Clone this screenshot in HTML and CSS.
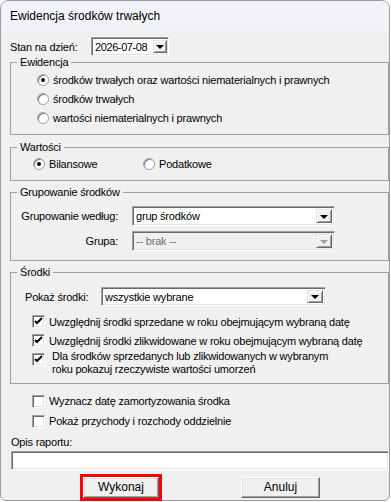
FILE: index.html
```html
<!DOCTYPE html>
<html lang="pl">
<head>
    <meta charset="UTF-8">
    <title>Ewidencja środków trwałych</title>
    <link rel="stylesheet" href="styles.css">
</head>
<body>
<div class="window">
    <div class="titlebar">Ewidencja środków trwałych</div>
    <div class="content">
        <div class="stan-row">
            <span class="stan-label">Stan na dzień:</span>
            <div class="combo date">
                <span class="value">2026-07-08</span>
                <span class="drop"><i class="arrow"></i></span>
            </div>
        </div>

        <fieldset class="group ewidencja">
            <legend>Ewidencja</legend>
            <div class="opt"><span class="radio on"></span>środków trwałych oraz wartości niematerialnych i prawnych</div>
            <div class="opt"><span class="radio"></span>środków trwałych</div>
            <div class="opt"><span class="radio"></span>wartości niematerialnych i prawnych</div>
        </fieldset>

        <fieldset class="group wartosci">
            <legend>Wartości</legend>
            <div class="opt-line">
                <div class="opt first"><span class="radio on"></span>Bilansowe</div>
                <div class="opt"><span class="radio"></span>Podatkowe</div>
            </div>
        </fieldset>

        <fieldset class="group grupowanie">
            <legend>Grupowanie środków</legend>
            <div class="form-grid">
                <span class="grid-label">Grupowanie według:</span>
                <div class="combo wide">
                    <span class="value">grup środków</span>
                    <span class="drop"><i class="arrow"></i></span>
                </div>
                <span class="grid-label">Grupa:</span>
                <div class="combo wide disabled">
                    <span class="value">-- brak --</span>
                    <span class="drop"><i class="arrow"></i></span>
                </div>
            </div>
        </fieldset>

        <fieldset class="group srodki">
            <legend>Środki</legend>
            <div class="pokaz-row">
                <span class="pokaz-label">Pokaż środki:</span>
                <div class="combo pokaz">
                    <span class="value">wszystkie wybrane</span>
                    <span class="drop"><i class="arrow"></i></span>
                </div>
            </div>
            <div class="chk"><span class="box"><svg width="9" height="9" viewBox="0 0 9 9"><path d="M1 4 L3 6 L8 1" fill="none" stroke="#000" stroke-width="2"/></svg></span>Uwzględnij środki sprzedane w roku obejmującym wybraną datę</div>
            <div class="chk"><span class="box"><svg width="9" height="9" viewBox="0 0 9 9"><path d="M1 4 L3 6 L8 1" fill="none" stroke="#000" stroke-width="2"/></svg></span>Uwzględnij środki zlikwidowane w roku obejmującym wybraną datę</div>
            <div class="chk multi"><span class="box"><svg width="9" height="9" viewBox="0 0 9 9"><path d="M1 4 L3 6 L8 1" fill="none" stroke="#000" stroke-width="2"/></svg></span><span class="text">Dla środków sprzedanych lub zlikwidowanych w wybranym<br>roku pokazuj rzeczywiste wartości umorzeń</span></div>
        </fieldset>

        <div class="extra">
            <div class="chk"><span class="box"></span>Wyznacz datę zamortyzowania środka</div>
            <div class="chk"><span class="box"></span>Pokaż przychody i rozchody oddzielnie</div>
        </div>

        <div class="opis-label">Opis raportu:</div>
        <div class="opis-input"></div>

        <div class="buttons">
            <div class="btn primary">Wykonaj</div>
            <div class="btn cancel">Anuluj</div>
        </div>
    </div>
</div>
</body>
</html>
```

FILE: styles.css
```css
body {
    margin: 0;
    background-color: #fff;
    font-family: 'Liberation Sans', Arial, sans-serif;
    font-size: 11px;
    letter-spacing: -0.2px;
    color: #000;
}
.window {
    width: 390px;
    height: 501px;
    box-sizing: border-box;
    border: 1px solid #9b9b9b;
    border-radius: 8px 8px 6px 6px;
    background-color: #f0f0f0;
}
.titlebar {
    height: 30px;
    line-height: 31px;
    padding-left: 9px;
    font-size: 12px;
    letter-spacing: 0;
    background-color: #f2f3f8;
    border-radius: 7px 7px 0 0;
}
.content {
    padding-left: 9px;
}

/* classic controls */
.combo {
    display: flex;
    align-items: center;
    box-sizing: border-box;
    border: 1px solid;
    border-color: #a0a0a0 #fff #fff #a0a0a0;
    box-shadow: inset 1px 1px #696969, inset -1px -1px #e3e3e3;
    background-color: #fff;
    padding: 2px;
}
.combo .value {
    flex: 1;
    padding-left: 1px;
    white-space: nowrap;
}
.combo .drop {
    display: flex;
    align-items: center;
    justify-content: center;
    box-sizing: border-box;
    width: 16px;
    height: 100%;
    border: 1px solid;
    border-color: #e3e3e3 #696969 #696969 #e3e3e3;
    box-shadow: inset 1px 1px #fff, inset -1px -1px #a0a0a0;
    background-color: #f0f0f0;
}
.arrow {
    width: 0;
    height: 0;
    border-left: 4px solid transparent;
    border-right: 4px solid transparent;
    border-top: 4px solid #000;
    margin-top: 1px;
}
.combo.disabled {
    background-color: #f0f0f0;
    color: #6d6d6d;
}
.combo.disabled .arrow {
    border-top-color: #a0a0a0;
}
.radio {
    position: relative;
    display: inline-block;
    box-sizing: border-box;
    width: 12px;
    height: 12px;
    border-radius: 50%;
    border: 1px solid #a0a0a0;
    box-shadow: inset 1px 1px #808080;
    background-color: #fff;
    margin-right: 4px;
    flex-shrink: 0;
}
.radio.on::after {
    content: '';
    position: absolute;
    left: 3px;
    top: 3px;
    width: 4px;
    height: 4px;
    border-radius: 50%;
    background-color: #000;
}
.box {
    display: inline-flex;
    align-items: center;
    justify-content: center;
    box-sizing: border-box;
    width: 13px;
    height: 13px;
    border: 1px solid;
    border-color: #a0a0a0 #fff #fff #a0a0a0;
    box-shadow: inset 1px 1px #696969, inset -1px -1px #e3e3e3;
    background-color: #fff;
    margin-right: 4px;
    flex-shrink: 0;
}

/* header row */
.stan-row {
    display: flex;
    align-items: center;
    margin-top: 6px;
    height: 19px;
}
.stan-label {
    width: 81px;
}
.combo.date {
    width: 78px;
    height: 19px;
    padding: 2px 1px 2px 2px;
    letter-spacing: -0.4px;
}
.combo.date .drop {
    width: 14px;
}

/* group boxes */
.group {
    margin: 0;
    padding: 0;
    border: 1px solid #a0a0a0;
    min-width: 0;
}
.group legend {
    margin-left: 6px;
    padding: 0 3px;
    line-height: 13px;
}
.opt {
    display: flex;
    align-items: center;
    height: 19px;
    white-space: nowrap;
}
.ewidencja {
    padding-top: 1px;
    padding-bottom: 7px;
}
.ewidencja .opt {
    padding-left: 26px;
}
.wartosci {
    margin-top: 6px;
    padding-bottom: 7px;
}
.opt-line {
    display: flex;
    padding-left: 22px;
}
.opt.first {
    width: 110px;
}
.grupowanie {
    margin-top: 5px;
    padding-top: 7px;
    padding-bottom: 9px;
}
.form-grid {
    display: grid;
    grid-template-columns: 98px 203px;
    column-gap: 14px;
    row-gap: 5px;
    align-items: center;
    padding-left: 9px;
}
.grid-label {
    text-align: right;
    white-space: nowrap;
}
.combo.wide {
    height: 20px;
}
.srodki {
    margin-top: 5px;
    padding-top: 8px;
    padding-bottom: 7px;
}
.pokaz-row {
    display: flex;
    align-items: center;
    padding-left: 14px;
    margin-bottom: 6px;
}
.pokaz-label {
    width: 76px;
}
.combo.pokaz {
    width: 225px;
    height: 19px;
}
.chk {
    display: flex;
    align-items: center;
    height: 19px;
    white-space: nowrap;
}
.srodki .chk {
    padding-left: 21px;
}
.chk.multi {
    align-items: flex-start;
    height: auto;
    line-height: 13px;
}
.chk.multi .box {
    margin-top: 3px;
}
.chk.multi .text {
    padding-left: 3px;
}
.extra {
    margin-top: 7px;
    padding-left: 22px;
}
.extra .chk {
    height: 20px;
}
.opis-label {
    margin-top: 5px;
    padding-left: 1px;
    line-height: 13px;
}
.opis-input {
    margin: 2px 0 0 1px;
    width: 378px;
    height: 19px;
    box-sizing: border-box;
    border: 1px solid;
    border-color: #a0a0a0 #fff #fff #a0a0a0;
    box-shadow: inset 1px 1px #696969, inset -1px -1px #e3e3e3;
    background-color: #fff;
}
.buttons {
    display: flex;
    margin-top: 7px;
    padding-left: 73px;
    gap: 82px;
}
.btn {
    box-sizing: border-box;
    height: 21px;
    line-height: 19px;
    text-align: center;
    border: 1px solid;
    border-color: #fff #696969 #696969 #fff;
    box-shadow: inset -1px -1px #a0a0a0, inset 1px 1px #e3e3e3;
    background-color: #f0f0f0;
    font-size: 12px;
    letter-spacing: 0;
}
.btn.primary {
    width: 76px;
    outline: 3px solid #f00;
}
.btn.cancel {
    width: 79px;
}
```
